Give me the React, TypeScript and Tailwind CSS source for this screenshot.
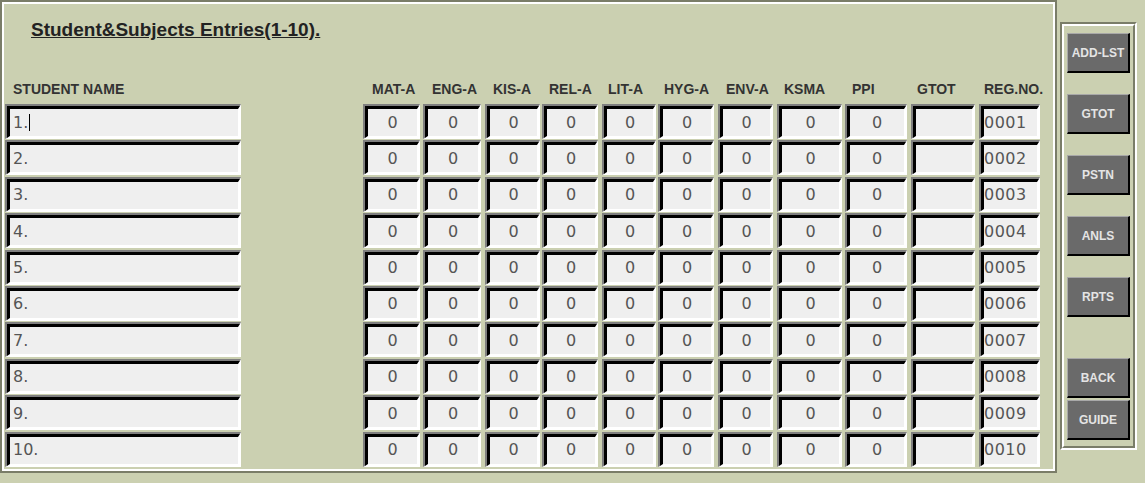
const cols = [
  { label: 'MAT-A', w: 'w-[57px]', ml: 'ml-[122px]', pl: 'pl-[9px]' },
  { label: 'ENG-A', w: 'w-[58px]', ml: 'ml-[3px]', pl: 'pl-[9px]' },
  { label: 'KIS-A', w: 'w-[55px]', ml: 'ml-[4px]', pl: 'pl-[8px]' },
  { label: 'REL-A', w: 'w-[56px]', ml: 'ml-[2px]', pl: 'pl-[7px]' },
  { label: 'LIT-A', w: 'w-[54px]', ml: 'ml-[4px]', pl: 'pl-[6px]' },
  { label: 'HYG-A', w: 'w-[56px]', ml: 'ml-[2px]', pl: 'pl-[6px]' },
  { label: 'ENV-A', w: 'w-[55px]', ml: 'ml-[4px]', pl: 'pl-[8px]' },
  { label: 'KSMA', w: 'w-[65px]', ml: 'ml-[4px]', pl: 'pl-[7px]' },
  { label: 'PPI', w: 'w-[62px]', ml: 'ml-[3px]', pl: 'pl-[7px]' },
  { label: 'GTOT', w: 'w-[64px]', ml: 'ml-[4px]', pl: 'pl-[6px]' },
  { label: 'REG.NO.', w: 'w-[61px]', ml: 'ml-[4px]', pl: 'pl-[5px]' },
];

const buttons = [
  { label: 'ADD-LST', mt: 'mt-0' },
  { label: 'GTOT', mt: 'mt-[21px]' },
  { label: 'PSTN', mt: 'mt-[21px]' },
  { label: 'ANLS', mt: 'mt-[21px]' },
  { label: 'RPTS', mt: 'mt-[21px]' },
  { label: 'BACK', mt: 'mt-[41px]' },
  { label: 'GUIDE', mt: 'mt-[2px]' },
];

const Field = ({ className, inner, children }: { className: string; inner: string; children?: React.ReactNode }) => (
  <div className={`h-[35px] border-t-2 border-l-2 border-r border-b border-t-[#7f7f7f] border-l-[#7f7f7f] border-r-white border-b-white ${className}`}>
    <div className={`h-full border-t-[3px] border-l-[3px] border-r-2 border-b-2 border-t-black border-l-black border-r-white border-b-white bg-[#efefef] flex items-center font-['DejaVu_Sans',sans-serif] text-[16px] text-[#555] ${inner}`}>
      {children}
    </div>
  </div>
);

const App = () => {
  const rows = Array.from({ length: 10 }, (_, i) => i + 1);

  return (
    <div className="w-[1145px] h-[483px] bg-[#cbd0b1] flex items-start overflow-hidden font-['Liberation_Sans',Arial,sans-serif]">
      <div className="w-[1057px] border-2 border-[#7a7d68]">
        <div className="border-2 border-white pl-[1px] pb-[2px]">
          <h1 className="pt-[15px] ml-[26px] text-[19px] leading-[22px] font-bold text-[#222] underline">
            Student&amp;Subjects Entries(1-10).
          </h1>

          <div className="mt-[40px] flex text-[14px] leading-[16px] font-bold text-[#333] whitespace-nowrap">
            <div className="w-[236px] pl-[8px]">STUDENT NAME</div>
            {cols.map((c) => (
              <div key={c.label} className={`${c.w} ${c.ml} ${c.pl}`}>
                {c.label}
              </div>
            ))}
          </div>

          <div className="mt-[7px] flex flex-col gap-[1.4px]">
            {rows.map((n) => (
              <div key={n} className="flex">
                <Field className="w-[236px]" inner="pl-[3px]">
                  {n}.
                  {n === 1 && <span className="ml-[1px] inline-block w-px h-[17px] bg-black" />}
                </Field>
                {cols.map((c, j) => {
                  const isReg = j === cols.length - 1;
                  const value = isReg ? String(n).padStart(4, '0') : c.label === 'GTOT' ? '' : '0';
                  return (
                    <Field
                      key={c.label}
                      className={`${c.w} ${c.ml}`}
                      inner={isReg ? 'pl-0 tracking-[0.5px]' : 'justify-center'}
                    >
                      {value}
                    </Field>
                  );
                })}
              </div>
            ))}
          </div>
        </div>
      </div>

      <div className="ml-[3px] mt-[22px] w-[77px] h-[428px] border-2 border-t-[#7a7d68] border-l-[#7a7d68] border-r-white border-b-white">
        <div className="h-full border-2 border-t-white border-l-white border-r-[#7a7d68] border-b-[#7a7d68] pt-[7px] px-[3px] flex flex-col">
          {buttons.map((b) => (
            <div
              key={b.label}
              className={`${b.mt} h-[40px] w-[63px] shrink-0 bg-[#6a6a6a] border-t border-l border-t-[#a8a8a8] border-l-[#a8a8a8] border-r-2 border-b-2 border-r-black border-b-black flex items-center justify-center text-[12px] font-bold text-[#e4e4e4]`}
            >
              {b.label}
            </div>
          ))}
        </div>
      </div>
    </div>
  );
};

export default App;
